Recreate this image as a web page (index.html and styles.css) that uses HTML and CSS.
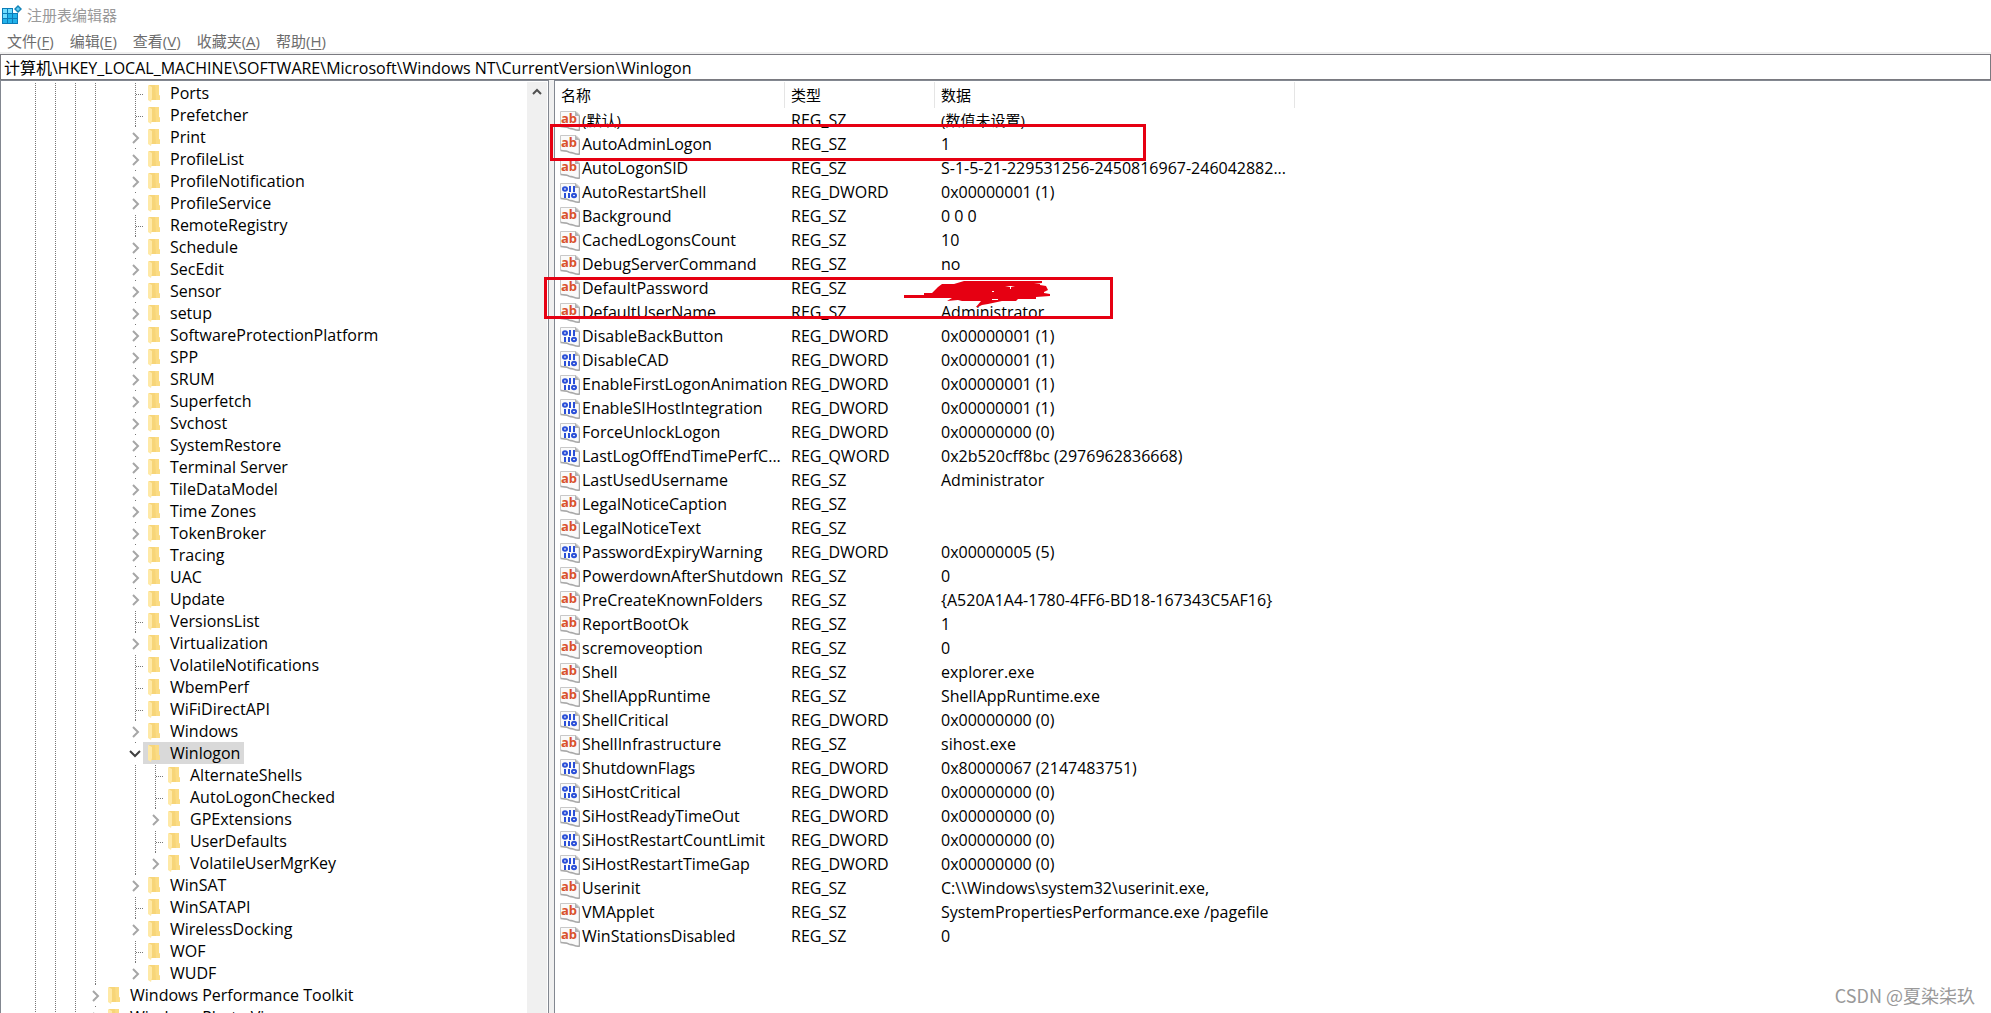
FILE: index.html
```html
<!DOCTYPE html>
<html lang="zh-CN">
<head>
<meta charset="utf-8">
<title>注册表编辑器</title>
<link rel="stylesheet" href="styles.css">
</head>
<body>
<svg class="defs" aria-hidden="true">
  <symbol id="folder" viewBox="0 0 12 17"><path d="M1 0H11V10L12 11V15H3Z" fill="#f7d578"/><path d="M7 0H11V10L12 11V15H8Z" fill="#fbdc84"/><path d="M0 0L4 2V13L3 17L0 15Z" fill="#ffe9a6"/></symbol>
  <symbol id="page" viewBox="0 0 20 20"><path d="M.5 .5H16L19.500 4V19C15 20 13 18 11 18S8 16 5 16L.5 15Z" fill="#fafafa" stroke="#c8c8c8"/><path d="M15 0L20 5H15Z" fill="#b4b4b4"/><path d="M19.500 5V19C15 20 13 17 11 17.500S8 15.500 5 16L.5 15.500" fill="none" stroke="#a8a8a8" stroke-width="1.500"/></symbol>
  <symbol id="sz" viewBox="0 0 20 20"><use href="#page"/><text x="9" y="12" class="glyph-ab">ab</text></symbol>
  <symbol id="bin" viewBox="0 0 20 20"><use href="#page"/><g fill="none" stroke="#2b50d8" stroke-width="2"><ellipse cx="5" cy="6" rx="2" ry="1.800"/><path d="M10 3V9M14 3V9M5 10V15M9 10V15"/><ellipse cx="14" cy="12.500" rx="2" ry="1.800"/></g></symbol>
  <symbol id="closed" viewBox="0 0 8 12"><path d="M1 1L6 6L1 11" fill="none" stroke="#a6a6a6" stroke-width="2"/></symbol>
  <symbol id="open" viewBox="0 0 12 8"><path d="M1 1L6 6L11 1" fill="none" stroke="#404040" stroke-width="2"/></symbol>
</svg>

<header class="titlebar">
  <svg class="app-icon" viewBox="0 0 20 20" aria-hidden="true"><path d="M0 3H16V19H0Z" fill="#0b7cb8"/><path d="M1 4H5V8H1ZM6 4H10V8H6ZM1 9H5V13H1Z" fill="#6fdcff"/><path d="M11 9H15V13H11ZM6 9H10V13H6ZM1 14H5V18H1ZM6 14H10V18H6ZM11 14H15V18H11Z" fill="#22b2ea"/><path d="M11 3H17V8H11Z" fill="#fff"/><path d="M16 0L20 4L16 8L12 4Z" fill="#1484b8"/><path d="M16 2L18 4L16 6L14 4Z" fill="#63cdf4"/></svg>
  <h1>注册表编辑器</h1>
</header>
<nav class="menu">
  <button>文件(<u>F</u>)</button><button>编辑(<u>E</u>)</button><button>查看(<u>V</u>)</button><button>收藏夹(<u>A</u>)</button><button>帮助(<u>H</u>)</button>
</nav>
<input class="address" type="text" aria-label="地址" value="计算机\HKEY_LOCAL_MACHINE\SOFTWARE\Microsoft\Windows NT\CurrentVersion\Winlogon">

<main class="panes">
<section class="tree-pane">
<ul class="tree">
<li class="leaf"><i></i><a href="#"><svg><use href="#folder"/></svg>Ports</a></li>
<li class="leaf"><i></i><a href="#"><svg><use href="#folder"/></svg>Prefetcher</a></li>
<li><i><svg><use href="#closed"/></svg></i><a href="#"><svg><use href="#folder"/></svg>Print</a></li>
<li><i><svg><use href="#closed"/></svg></i><a href="#"><svg><use href="#folder"/></svg>ProfileList</a></li>
<li><i><svg><use href="#closed"/></svg></i><a href="#"><svg><use href="#folder"/></svg>ProfileNotification</a></li>
<li><i><svg><use href="#closed"/></svg></i><a href="#"><svg><use href="#folder"/></svg>ProfileService</a></li>
<li class="leaf"><i></i><a href="#"><svg><use href="#folder"/></svg>RemoteRegistry</a></li>
<li><i><svg><use href="#closed"/></svg></i><a href="#"><svg><use href="#folder"/></svg>Schedule</a></li>
<li><i><svg><use href="#closed"/></svg></i><a href="#"><svg><use href="#folder"/></svg>SecEdit</a></li>
<li><i><svg><use href="#closed"/></svg></i><a href="#"><svg><use href="#folder"/></svg>Sensor</a></li>
<li><i><svg><use href="#closed"/></svg></i><a href="#"><svg><use href="#folder"/></svg>setup</a></li>
<li><i><svg><use href="#closed"/></svg></i><a href="#"><svg><use href="#folder"/></svg>SoftwareProtectionPlatform</a></li>
<li><i><svg><use href="#closed"/></svg></i><a href="#"><svg><use href="#folder"/></svg>SPP</a></li>
<li><i><svg><use href="#closed"/></svg></i><a href="#"><svg><use href="#folder"/></svg>SRUM</a></li>
<li><i><svg><use href="#closed"/></svg></i><a href="#"><svg><use href="#folder"/></svg>Superfetch</a></li>
<li><i><svg><use href="#closed"/></svg></i><a href="#"><svg><use href="#folder"/></svg>Svchost</a></li>
<li><i><svg><use href="#closed"/></svg></i><a href="#"><svg><use href="#folder"/></svg>SystemRestore</a></li>
<li><i><svg><use href="#closed"/></svg></i><a href="#"><svg><use href="#folder"/></svg>Terminal Server</a></li>
<li><i><svg><use href="#closed"/></svg></i><a href="#"><svg><use href="#folder"/></svg>TileDataModel</a></li>
<li><i><svg><use href="#closed"/></svg></i><a href="#"><svg><use href="#folder"/></svg>Time Zones</a></li>
<li><i><svg><use href="#closed"/></svg></i><a href="#"><svg><use href="#folder"/></svg>TokenBroker</a></li>
<li><i><svg><use href="#closed"/></svg></i><a href="#"><svg><use href="#folder"/></svg>Tracing</a></li>
<li><i><svg><use href="#closed"/></svg></i><a href="#"><svg><use href="#folder"/></svg>UAC</a></li>
<li><i><svg><use href="#closed"/></svg></i><a href="#"><svg><use href="#folder"/></svg>Update</a></li>
<li class="leaf"><i></i><a href="#"><svg><use href="#folder"/></svg>VersionsList</a></li>
<li><i><svg><use href="#closed"/></svg></i><a href="#"><svg><use href="#folder"/></svg>Virtualization</a></li>
<li class="leaf"><i></i><a href="#"><svg><use href="#folder"/></svg>VolatileNotifications</a></li>
<li class="leaf"><i></i><a href="#"><svg><use href="#folder"/></svg>WbemPerf</a></li>
<li class="leaf"><i></i><a href="#"><svg><use href="#folder"/></svg>WiFiDirectAPI</a></li>
<li><i><svg><use href="#closed"/></svg></i><a href="#"><svg><use href="#folder"/></svg>Windows</a></li>
<li class="expanded"><i><svg><use href="#open"/></svg></i><a href="#" class="selected"><svg><use href="#folder"/></svg>Winlogon</a></li>
<li class="leaf child"><i></i><a href="#"><svg><use href="#folder"/></svg>AlternateShells</a></li>
<li class="leaf child"><i></i><a href="#"><svg><use href="#folder"/></svg>AutoLogonChecked</a></li>
<li class="child"><i><svg><use href="#closed"/></svg></i><a href="#"><svg><use href="#folder"/></svg>GPExtensions</a></li>
<li class="leaf child"><i></i><a href="#"><svg><use href="#folder"/></svg>UserDefaults</a></li>
<li class="child"><i><svg><use href="#closed"/></svg></i><a href="#"><svg><use href="#folder"/></svg>VolatileUserMgrKey</a></li>
<li><i><svg><use href="#closed"/></svg></i><a href="#"><svg><use href="#folder"/></svg>WinSAT</a></li>
<li class="leaf"><i></i><a href="#"><svg><use href="#folder"/></svg>WinSATAPI</a></li>
<li><i><svg><use href="#closed"/></svg></i><a href="#"><svg><use href="#folder"/></svg>WirelessDocking</a></li>
<li class="leaf"><i></i><a href="#"><svg><use href="#folder"/></svg>WOF</a></li>
<li><i><svg><use href="#closed"/></svg></i><a href="#"><svg><use href="#folder"/></svg>WUDF</a></li>
<li class="parent"><i><svg><use href="#closed"/></svg></i><a href="#"><svg><use href="#folder"/></svg>Windows Performance Toolkit</a></li>
<li class="parent"><i><svg><use href="#closed"/></svg></i><a href="#"><svg><use href="#folder"/></svg>Windows Photo Viewer</a></li>
</ul>
<div class="scrollbar"><button aria-label="向上滚动"><svg viewBox="0 0 10 8"><path d="M1 6L5 2L9 6" fill="none" stroke="#505050" stroke-width="2"/></svg></button></div>
</section>
<div class="splitter"></div>
<section class="list-pane">
<table>
<colgroup><col class="c-name"><col class="c-type"><col class="c-data"><col></colgroup>
<thead><tr><th>名称</th><th>类型</th><th>数据</th><td></td></tr></thead>
<tbody>
<tr><td class="cjk"><svg><use href="#sz"/></svg>(默认)</td><td>REG_SZ</td><td class="cjk">(数值未设置)</td></tr>
<tr><td><svg><use href="#sz"/></svg>AutoAdminLogon</td><td>REG_SZ</td><td>1</td></tr>
<tr><td><svg><use href="#sz"/></svg>AutoLogonSID</td><td>REG_SZ</td><td>S-1-5-21-229531256-2450816967-246042882...</td></tr>
<tr><td><svg><use href="#bin"/></svg>AutoRestartShell</td><td>REG_DWORD</td><td>0x00000001 (1)</td></tr>
<tr><td><svg><use href="#sz"/></svg>Background</td><td>REG_SZ</td><td>0 0 0</td></tr>
<tr><td><svg><use href="#sz"/></svg>CachedLogonsCount</td><td>REG_SZ</td><td>10</td></tr>
<tr><td><svg><use href="#sz"/></svg>DebugServerCommand</td><td>REG_SZ</td><td>no</td></tr>
<tr><td><svg><use href="#sz"/></svg>DefaultPassword</td><td>REG_SZ</td><td></td></tr>
<tr><td><svg><use href="#sz"/></svg>DefaultUserName</td><td>REG_SZ</td><td>Administrator</td></tr>
<tr><td><svg><use href="#bin"/></svg>DisableBackButton</td><td>REG_DWORD</td><td>0x00000001 (1)</td></tr>
<tr><td><svg><use href="#bin"/></svg>DisableCAD</td><td>REG_DWORD</td><td>0x00000001 (1)</td></tr>
<tr><td><svg><use href="#bin"/></svg>EnableFirstLogonAnimation</td><td>REG_DWORD</td><td>0x00000001 (1)</td></tr>
<tr><td><svg><use href="#bin"/></svg>EnableSIHostIntegration</td><td>REG_DWORD</td><td>0x00000001 (1)</td></tr>
<tr><td><svg><use href="#bin"/></svg>ForceUnlockLogon</td><td>REG_DWORD</td><td>0x00000000 (0)</td></tr>
<tr><td><svg><use href="#bin"/></svg>LastLogOffEndTimePerfC...</td><td>REG_QWORD</td><td>0x2b520cff8bc (2976962836668)</td></tr>
<tr><td><svg><use href="#sz"/></svg>LastUsedUsername</td><td>REG_SZ</td><td>Administrator</td></tr>
<tr><td><svg><use href="#sz"/></svg>LegalNoticeCaption</td><td>REG_SZ</td><td></td></tr>
<tr><td><svg><use href="#sz"/></svg>LegalNoticeText</td><td>REG_SZ</td><td></td></tr>
<tr><td><svg><use href="#bin"/></svg>PasswordExpiryWarning</td><td>REG_DWORD</td><td>0x00000005 (5)</td></tr>
<tr><td><svg><use href="#sz"/></svg>PowerdownAfterShutdown</td><td>REG_SZ</td><td>0</td></tr>
<tr><td><svg><use href="#sz"/></svg>PreCreateKnownFolders</td><td>REG_SZ</td><td>{A520A1A4-1780-4FF6-BD18-167343C5AF16}</td></tr>
<tr><td><svg><use href="#sz"/></svg>ReportBootOk</td><td>REG_SZ</td><td>1</td></tr>
<tr><td><svg><use href="#sz"/></svg>scremoveoption</td><td>REG_SZ</td><td>0</td></tr>
<tr><td><svg><use href="#sz"/></svg>Shell</td><td>REG_SZ</td><td>explorer.exe</td></tr>
<tr><td><svg><use href="#sz"/></svg>ShellAppRuntime</td><td>REG_SZ</td><td>ShellAppRuntime.exe</td></tr>
<tr><td><svg><use href="#bin"/></svg>ShellCritical</td><td>REG_DWORD</td><td>0x00000000 (0)</td></tr>
<tr><td><svg><use href="#sz"/></svg>ShellInfrastructure</td><td>REG_SZ</td><td>sihost.exe</td></tr>
<tr><td><svg><use href="#bin"/></svg>ShutdownFlags</td><td>REG_DWORD</td><td>0x80000067 (2147483751)</td></tr>
<tr><td><svg><use href="#bin"/></svg>SiHostCritical</td><td>REG_DWORD</td><td>0x00000000 (0)</td></tr>
<tr><td><svg><use href="#bin"/></svg>SiHostReadyTimeOut</td><td>REG_DWORD</td><td>0x00000000 (0)</td></tr>
<tr><td><svg><use href="#bin"/></svg>SiHostRestartCountLimit</td><td>REG_DWORD</td><td>0x00000000 (0)</td></tr>
<tr><td><svg><use href="#bin"/></svg>SiHostRestartTimeGap</td><td>REG_DWORD</td><td>0x00000000 (0)</td></tr>
<tr><td><svg><use href="#sz"/></svg>Userinit</td><td>REG_SZ</td><td>C:\\Windows\system32\userinit.exe,</td></tr>
<tr><td><svg><use href="#sz"/></svg>VMApplet</td><td>REG_SZ</td><td>SystemPropertiesPerformance.exe /pagefile</td></tr>
<tr><td><svg><use href="#sz"/></svg>WinStationsDisabled</td><td>REG_SZ</td><td>0</td></tr>
</tbody>
</table>
</section>
</main>
<div class="mark mark-logon"></div>
<div class="mark mark-password"></div>
<svg class="scribble" viewBox="0 0 146 26" aria-hidden="true"><path d="M0 14H20V12H28L34 6L38 3H50L60 0H138V2L130 3H136V4L142 5L144 9L140 11V12L146 13V15L132 16V18H114L112 20H98L84 23L78 24L74 26H72L77 20H58L54 19L43 20L48 17H0Z" fill="#e60012"/><path d="M101 5H111L107 6V8H106V6ZM88 10H90V11H88ZM88 18H94V19H88Z" fill="#fff"/></svg>
<p class="watermark">CSDN @夏染柒玖</p>
</body>
</html>
```
FILE: styles.css
```css
* { box-sizing: border-box; }
body {
  margin: 0;
  height: 100vh;
  display: flex;
  flex-direction: column;
  position: relative;
  overflow: hidden;
  background: #fff;
  color: #000;
  font: 16px/22px "Open Sans", "Noto Sans CJK SC", sans-serif;
}
.defs { display: none; }
.titlebar {
  display: flex;
  align-items: center;
  gap: 5px;
  height: 30px;
  padding-left: 2px;
}
.app-icon { width: 20px; height: 20px; }
h1 { margin: 0; font-size: 15px; font-weight: 400; color: #999; }
.menu {
  display: flex;
  gap: 16px;
  height: 24px;
  padding-left: 7px;
  border-bottom: 2px solid #f0f0f0;
}
button { padding: 0; border: 0; background: none; }
.menu button { font: inherit; font-size: 15px; color: #6d6d6d; }
u { text-underline-offset: 2px; }
.address {
  height: 26px;
  padding: 0 3px 1px;
  border: 1px solid #7a7a80;
  background: #fff;
  color: #000;
  font: inherit;
}
.panes { flex: 1; min-height: 0; display: flex; }
.tree-pane {
  display: flex;
  flex: none;
  width: 549px;
  padding-top: 1px;
  border: 1px solid #828790;
  border-bottom: 0;
  overflow: hidden;
}
.tree { flex: 1; margin: 0; padding: 0; list-style: none; }
.tree li {
  display: flex;
  height: 22px;
  padding-left: 119px;
  white-space: nowrap;
  --dot: #777;
  --mask: repeating-linear-gradient(#fff 0 1px, transparent 1px 2px);
  --guides: repeating-linear-gradient(90deg, transparent 0 15px, var(--dot) 15px 16px, transparent 16px 20px);
  background: var(--mask), var(--guides) 19px 0 / 80px 100% no-repeat;
}
.tree li.child {
  padding-left: 139px;
  background: var(--mask), var(--guides) 19px 0 / 80px 100% no-repeat, var(--guides) 119px 0 / 20px 100% no-repeat;
}
.tree li.parent {
  padding-left: 79px;
  background: var(--mask), var(--guides) 19px 0 / 60px 100% no-repeat;
}
.tree i {
  flex: none;
  width: 23px;
  background: linear-gradient(var(--dot), var(--dot)) 15px 0 / 1px 1px no-repeat;
}
.tree i svg { display: block; width: 8px; height: 12px; margin: 6px 0 0 12px; }
.tree .expanded i svg { width: 12px; height: 8px; margin: 8px 0 0 9px; }
.tree .leaf i {
  background:
    repeating-linear-gradient(90deg, transparent 0 1px, var(--dot) 1px 2px) 15px 12px / 9px 1px no-repeat,
    repeating-linear-gradient(transparent 0 1px, var(--dot) 1px 2px) 15px 0 / 1px 100% no-repeat;
}
.tree a {
  display: flex;
  align-items: center;
  gap: 10px;
  padding: 0 4px 0 5px;
  color: inherit;
  text-decoration: none;
}
.tree a svg { width: 12px; height: 17px; }
.tree .selected { background: #d9d9d9; }
.scrollbar { flex: none; width: 21px; border-right: 1px solid #fff; background: #f0f0f0; }
.scrollbar button { display: block; width: 20px; height: 20px; }
.scrollbar svg { display: block; width: 10px; height: 8px; margin: auto; }
.splitter { flex: none; width: 5px; background: #f0f0f0; }
.list-pane {
  flex: 1;
  min-width: 0;
  padding-top: 1px;
  border-left: 1px solid #828790;
  border-top: 1px solid #828790;
  overflow: hidden;
}
table { width: 100%; table-layout: fixed; border-collapse: collapse; }
.c-name { width: 230px; }
.c-type { width: 150px; }
.c-data { width: 360px; }
th {
  height: 26px;
  padding: 0 0 0 6px;
  text-align: left;
  font-size: 15px;
  font-weight: 400;
  background: linear-gradient(#e5e5e5, #e5e5e5) right / 1px 100% no-repeat;
}
td { height: 24px; padding: 0 0 0 6px; white-space: nowrap; }
td:first-child { padding-left: 5px; }
td svg { width: 20px; height: 20px; margin-right: 2px; vertical-align: middle; }
.cjk { font-size: 15px; }
.glyph-ab { font: 700 13px "Open Sans", sans-serif; fill: #d9512c; text-anchor: middle; }
.mark { position: absolute; border: 3px solid #e60012; }
.mark-logon { left: 550px; top: 124px; width: 596px; height: 37px; }
.mark-password { left: 544px; top: 277px; width: 569px; height: 42px; }
.scribble { position: absolute; left: 904px; top: 281px; width: 146px; height: 26px; }
.watermark {
  position: absolute;
  right: 16px;
  bottom: 7px;
  margin: 0;
  font-family: "Noto Sans CJK SC", sans-serif;
  font-size: 18px;
  color: #999;
}
```
